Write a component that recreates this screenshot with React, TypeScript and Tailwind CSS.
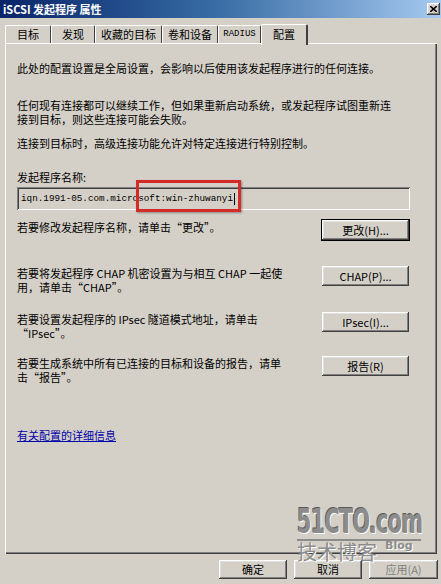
import React from 'react';

const cjk = "font-['Noto_Sans_CJK_SC','Liberation_Sans',sans-serif]";
const mono = "font-['Liberation_Mono','Noto_Sans_CJK_SC',monospace]";

const raised =
  'shadow-[inset_-1px_-1px_#404040,inset_1px_1px_#ffffff,inset_-2px_-2px_#808080,inset_2px_2px_#dfdfdf]';
const sunken =
  'shadow-[inset_1px_1px_#808080,inset_-1px_-1px_#ffffff,inset_2px_2px_#404040,inset_-2px_-2px_#d4d0c8]';

function WinButton({
  label,
  def = false,
  disabled = false,
  className = '',
}: {
  label: string;
  def?: boolean;
  disabled?: boolean;
  className?: string;
}) {
  return (
    <div
      className={`flex items-center justify-center bg-[#d4d0c8] ${raised} ${
        def ? 'outline outline-1 outline-black' : ''
      } ${disabled ? 'text-[#808080]' : 'text-black'} ${cjk} text-[11px] leading-none ${className}`}
    >
      {label}
    </div>
  );
}

type Tab = { name: string; w: string; mono?: boolean };

const tabs: Tab[] = [
  { name: '目标', w: 'w-[46px]' },
  { name: '发现', w: 'w-[44px]' },
  { name: '收藏的目标', w: 'w-[67px]' },
  { name: '卷和设备', w: 'w-[56px]' },
  { name: 'RADIUS', w: 'w-[43px]', mono: true },
];

function Row({ lines, button, def = false }: { lines: string[]; button: string; def?: boolean }) {
  return (
    <div className="flex items-start justify-between">
      <div className="text-[11px] leading-[14px] whitespace-nowrap">
        {lines.map((l) => (
          <div key={l}>{l}</div>
        ))}
      </div>
      <WinButton label={button} def={def} className="w-[87px] h-[20px]" />
    </div>
  );
}

export default function App() {
  return (
    <div className={`relative w-[441px] h-[584px] overflow-hidden bg-[#d4d0c8] flex flex-col ${cjk}`}>
      {/* title bar */}
      <div className="h-[18px] flex items-center justify-between bg-gradient-to-r from-[#0a246a] via-[#3a6ea5] to-[#a6caf0] pl-[3px] pr-[1px]">
        <span className="text-white font-bold text-[11px] leading-none">iSCSI 发起程序 属性</span>
        <div className={`w-[13px] h-[12px] bg-[#d4d0c8] ${raised} flex items-center justify-center`}>
          <svg width="7" height="6" viewBox="0 0 7 6">
            <path d="M0 0L7 6M7 0L0 6" stroke="black" strokeWidth="1.6" />
          </svg>
        </div>
      </div>

      {/* tabs */}
      <div className="flex items-end pl-[5px] mt-[5px] h-[20px] relative z-10">
        {tabs.map((t) => (
          <div
            key={t.name}
            className={`${t.w} h-[18px] flex items-center justify-center border-t border-l border-white border-r border-r-[#404040] rounded-t-[2px] ${
              t.mono ? `${mono} text-[9px]` : 'text-[11px]'
            } leading-none`}
          >
            {t.name}
          </div>
        ))}
        <div className="w-[47px] h-[21px] -mb-[2px] bg-[#d4d0c8] flex items-start pt-[4px] justify-center border-t border-l border-white border-r-2 border-r-[#404040] rounded-t-[2px] text-[11px] leading-none">
          配置
        </div>
      </div>

      {/* panel */}
      <div className="mx-[5px] w-[432px] h-[511px] shadow-[inset_1px_1px_#ffffff,inset_-1px_-1px_#404040,inset_-2px_-2px_#808080] pl-[12px] pr-[28px] pt-[18px] text-black">
        <div className="text-[11px] leading-[14px] whitespace-nowrap">
          此处的配置设置是全局设置，会影响以后使用该发起程序进行的任何连接。
        </div>
        <div className="mt-[23px] text-[11px] leading-[14px] whitespace-nowrap">
          <div>任何现有连接都可以继续工作，但如果重新启动系统，或发起程序试图重新连</div>
          <div>接到目标，则这些连接可能会失败。</div>
        </div>
        <div className="mt-[10px] text-[11px] leading-[14px] whitespace-nowrap">
          连接到目标时，高级连接功能允许对特定连接进行特别控制。
        </div>
        <div className="mt-[20px] text-[11px] leading-[14px]">发起程序名称:</div>
        <div className={`mt-[3px] w-[393px] h-[23px] ${sunken} flex items-center pl-[4px]`}>
          <span className={`${mono} text-[9.3px] leading-none`}>iqn.1991-05.com.microsoft:win-zhuwanyi</span>
          <span className="ml-[1px] w-px h-[12px] bg-black" />
        </div>
        <div className="mt-[10px]">
          <Row lines={['若要修改发起程序名称，请单击“更改”。']} button="更改(H)..." def />
        </div>
        <div className="mt-[26px]">
          <Row lines={['若要将发起程序 CHAP 机密设置为与相互 CHAP 一起使', '用，请单击“CHAP”。']} button="CHAP(P)..." />
        </div>
        <div className="mt-[18px]">
          <Row lines={['若要设置发起程序的 IPsec 隧道模式地址，请单击', '“IPsec”。']} button="IPsec(I)..." />
        </div>
        <div className="mt-[16px]">
          <Row lines={['若要生成系统中所有已连接的目标和设备的报告，请单', '击“报告”。']} button="报告(R)" />
        </div>
        <div className="mt-[44px] text-[11px] leading-[14px] text-[#0000a8] underline">有关配置的详细信息</div>
      </div>

      {/* bottom buttons */}
      <div className="flex justify-end gap-[7px] pr-[3px] mt-[6px]">
        <WinButton label="确定" className="w-[68px] h-[19px]" />
        <WinButton label="取消" className="w-[68px] h-[19px]" />
        <WinButton label="应用(A)" disabled className="w-[69px] h-[19px]" />
      </div>

      {/* red highlight annotation */}
      <div className="absolute left-[136px] top-[180px] w-[105px] h-[32px] border-[3px] border-[#d42a2a] shadow-[1px_1px_2px_rgba(0,0,0,0.35)]" />

      {/* watermark */}
      <div className="absolute left-[297px] top-[507px] w-[126px] pointer-events-none">
        <div className="font-['DejaVu_Sans_Condensed',sans-serif] font-bold text-[33px] leading-[30px] text-[#8c8c8c] tracking-[-1px] [text-shadow:1px_1px_0_#ffffff,-1px_-1px_0_#5a5a5a] scale-x-[0.7] origin-left whitespace-nowrap">
          51CTO.com
        </div>
        <div className="h-[2px] bg-[#8c8c8c] mt-[2px] w-[124px]" />
        <div className="flex items-start">
          <span className="text-[20px] leading-[22px] text-[#8c8c8c] [text-shadow:1px_1px_0_#ffffff]">技术博客</span>
          <span className="ml-[8px] mt-[-1px] font-['DejaVu_Sans',sans-serif] font-bold text-[11px] leading-[12px] text-[#8c8c8c] [text-shadow:1px_1px_0_#ffffff]">Blog</span>
        </div>
      </div>
    </div>
  );
}
